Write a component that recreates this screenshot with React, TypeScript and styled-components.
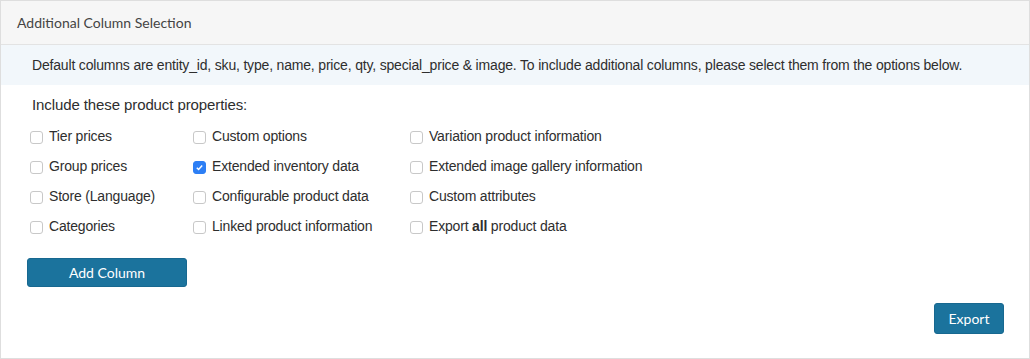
import styled, { createGlobalStyle } from "styled-components";

const GlobalStyle = createGlobalStyle`
  body {
    margin: 0;
    background: #fff;
    font-family: "Liberation Sans", Arial, sans-serif;
    color: #333;
  }
`;

const Panel = styled.div`
  width: 1030px;
  height: 359px;
  box-sizing: border-box;
  border: 1px solid #dedede;
  display: flex;
  flex-direction: column;
`;

const Header = styled.div`
  height: 44px;
  box-sizing: border-box;
  background: #f6f6f6;
  border-bottom: 1px solid #e3e3e3;
  padding: 0 16px;
  display: flex;
  align-items: center;
  font-family: Lato, "Open Sans", sans-serif;
  font-size: 14px;
  color: #444;
`;

const Notice = styled.div`
  height: 40px;
  background: #f2f7fb;
  padding: 0 31px;
  display: flex;
  align-items: center;
  font-size: 14px;
  letter-spacing: -0.18px;
  white-space: nowrap;
  color: #2e2e2e;
`;

const Body = styled.div`
  flex: 1;
  display: flex;
  flex-direction: column;
  padding: 10px 25px 0 29px;
`;

const Lead = styled.div`
  font-size: 15px;
  letter-spacing: -0.1px;
  margin-left: 2px;
  height: 20px;
  line-height: 20px;
  color: #2e2e2e;
`;

const Grid = styled.div`
  display: grid;
  grid-template-columns: 163px 217px auto;
  grid-auto-rows: 30px;
  margin-top: 6px;
`;

const Option = styled.label`
  display: flex;
  align-items: center;
  gap: 6px;
  font-size: 14px;
  letter-spacing: -0.18px;
  color: #2e2e2e;
  height: 30px;
`;

const Box = styled.span<{ $checked?: boolean }>`
  width: 13px;
  height: 13px;
  border-radius: 3px;
  box-sizing: border-box;
  border: 1px solid ${(p) => (p.$checked ? "#2d7ff5" : "#c8c8c8")};
  background: ${(p) => (p.$checked ? "#2d7ff5" : "#fff")};
  display: inline-flex;
  align-items: center;
  justify-content: center;
  margin-top: 2px;
  flex-shrink: 0;
`;

const Button = styled.button<{ $wide?: boolean }>`
  font-family: Lato, "Open Sans", sans-serif;
  font-size: 14px;
  color: #fff;
  background: #1b739d;
  border: 1px solid #176890;
  border-radius: 3px;
  height: ${(p) => (p.$wide ? "29px" : "31px")};
  width: ${(p) => (p.$wide ? "160px" : "70px")};
  cursor: pointer;
  padding: 0;
`;

const AddRow = styled.div`
  margin-top: 17px;
  margin-left: -3px;
`;

const Footer = styled.div`
  display: flex;
  justify-content: flex-end;
  margin-top: 16px;
`;

const options: { label: React.ReactNode; checked?: boolean }[] = [
  { label: "Tier prices" },
  { label: "Custom options" },
  { label: "Variation product information" },
  { label: "Group prices" },
  { label: "Extended inventory data", checked: true },
  { label: "Extended image gallery information" },
  { label: "Store (Language)" },
  { label: "Configurable product data" },
  { label: "Custom attributes" },
  { label: "Categories" },
  { label: "Linked product information" },
  {
    label: (
      <span>
        Export <b>all</b> product data
      </span>
    ),
  },
];

export default function App() {
  return (
    <>
      <GlobalStyle />
      <Panel>
        <Header>Additional Column Selection</Header>
        <Notice>
          Default columns are entity_id, sku, type, name, price, qty, special_price &amp; image. To include
          additional columns, please select them from the options below.
        </Notice>
        <Body>
          <Lead>Include these product properties:</Lead>
          <Grid>
            {options.map((o, i) => (
              <Option key={i}>
                <Box $checked={o.checked}>
                  {o.checked && (
                    <svg width="9" height="9" viewBox="0 0 8 8">
                      <path d="M1.6 4.2 L3.2 5.8 L6.4 2.2" fill="none" stroke="#fff" strokeWidth="1.3" />
                    </svg>
                  )}
                </Box>
                {o.label}
              </Option>
            ))}
          </Grid>
          <AddRow>
            <Button $wide>Add Column</Button>
          </AddRow>
          <Footer>
            <Button>Export</Button>
          </Footer>
        </Body>
      </Panel>
    </>
  );
}
